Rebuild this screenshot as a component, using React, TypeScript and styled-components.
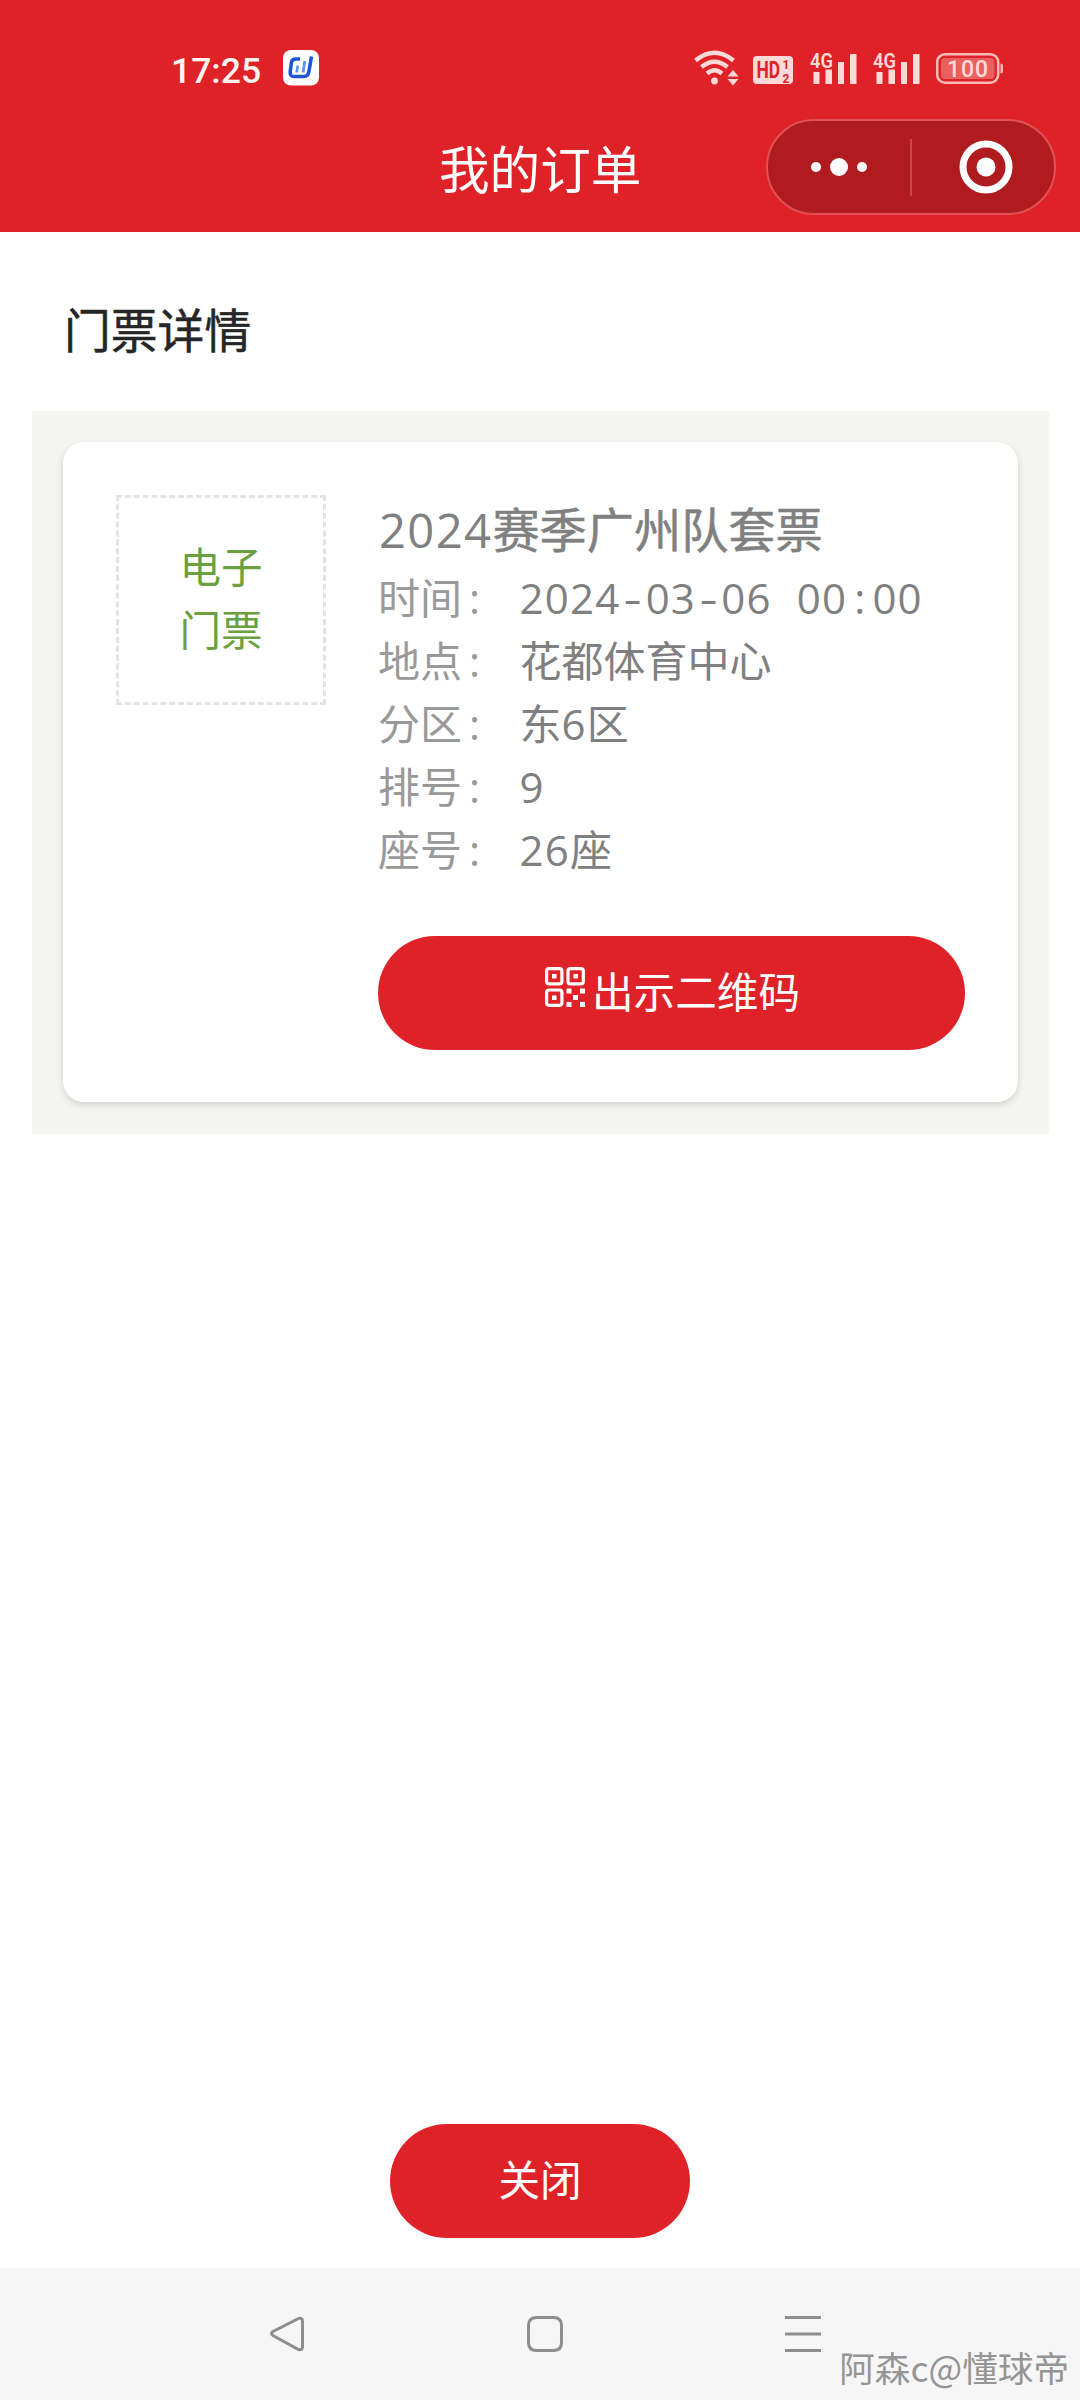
import React from "react";
import styled, { createGlobalStyle } from "styled-components";

const RED = "#df2227";
const PINK = "#ffd9d7";

const Global = createGlobalStyle`
  html, body { margin: 0; padding: 0; background: #fff; }
  body { font-family: "Open Sans", "Noto Sans CJK SC", sans-serif; }
`;

const Screen = styled.div`
  width: 1080px;
  height: 2400px;
  display: flex;
  flex-direction: column;
  overflow: hidden;
  background: #fff;
`;

const Header = styled.header`
  height: 232px;
  flex: none;
  background: ${RED};
  display: flex;
  flex-direction: column;
`;

const StatusBar = styled.div`
  height: 119px;
  box-sizing: border-box;
  padding: 16px 76px 0 171px;
  display: flex;
  align-items: flex-start;
  justify-content: space-between;
`;

const StatusGroup = styled.div<{ $gap: number }>`
  display: flex;
  align-items: flex-start;
  gap: ${(p) => p.$gap}px;
  padding-top: 34px;
`;

const Clock = styled.span`
  font: 500 35.5px/42px Roboto, sans-serif;
  color: #fff3f0;
  width: 90px;
  white-space: nowrap;
`;

const TitleBar = styled.div`
  height: 96px;
  display: grid;
  grid-template-columns: 1fr 202px 1fr;
  align-items: center;
`;

const PageTitle = styled.h1`
  grid-column: 2;
  margin: 0;
  font: 400 50.6px/94px "Noto Sans CJK SC", sans-serif;
  color: #fff;
  white-space: nowrap;
`;

const Capsule = styled.div`
  justify-self: end;
  margin-right: 24px;
  width: 290px;
  height: 96px;
  box-sizing: border-box;
  border: 2px solid #e25055;
  border-radius: 48px;
  background: #b01b1f;
  display: flex;
  align-items: center;
`;

const CapsuleHalf = styled.div<{ $left?: number; $right?: number }>`
  flex: 0 0 142px;
  display: flex;
  align-items: center;
  justify-content: center;
  padding-left: ${(p) => p.$left ?? 0}px;
  padding-right: ${(p) => p.$right ?? 0}px;
  box-sizing: border-box;
`;

const CapsuleDivider = styled.div`
  width: 2px;
  height: 57px;
  background: #cb4549;
`;

const Heading = styled.h2`
  margin: 0;
  height: 179px;
  padding-left: 64px;
  flex: none;
  font: 400 46.8px/192px "Noto Sans CJK SC", sans-serif;
  -webkit-text-stroke: 0.5px #262626;
  color: #262626;
`;

const Panel = styled.section`
  margin: 0 31px 0 32px;
  height: 723px;
  box-sizing: border-box;
  padding: 31px;
  flex: none;
  background: #f4f4f0;
`;

const Card = styled.article`
  height: 660px;
  box-sizing: border-box;
  padding: 53px;
  display: flex;
  gap: 52px;
  align-items: flex-start;
  background: #fff;
  border-radius: 21px;
  box-shadow: 0 3px 7px rgba(0, 0, 0, 0.14);
`;

const Stub = styled.div`
  width: 210px;
  height: 210px;
  flex: none;
  box-sizing: border-box;
  border: 3px dashed #e4e4e4;
  padding-bottom: 6px;
  display: flex;
  flex-direction: column;
  align-items: center;
  justify-content: center;
  font: 400 41.5px/63px "Noto Sans CJK SC", sans-serif;
  color: #6ba03f;
`;

const Details = styled.div`
  flex: 1;
  display: flex;
  flex-direction: column;
`;

const TicketName = styled.h3`
  margin: 0 0 1px 1px;
  font: 400 47.2px/70px "Open Sans", "Noto Sans CJK SC", sans-serif;
  color: #808080;
  white-space: nowrap;
`;

const Strong = styled.span`
  -webkit-text-stroke: 0.5px #808080;
`;

const Row = styled.div`
  display: flex;
  height: 63px;
  font-size: 42px;
  line-height: 63px;
  white-space: pre;
`;

const Label = styled.span`
  width: 141.500px;
  color: #999;
`;

const Value = styled.span`
  color: #808080;
`;

const Digits = styled.span`
  letter-spacing: 0.029em;
`;

const Cell = styled.span<{ $side: number }>`
  padding: 0 ${(p) => p.$side}px;
`;

const Hyphen = styled.span`
  display: inline-block;
  width: 25.2px;
  text-align: center;
  transform: scaleX(1.35);
`;

const Pill = styled.button<{ $width: number; $top: number; $nudge?: number }>`
  width: ${(p) => p.$width}px;
  height: 114px;
  margin: ${(p) => p.$top}px 0 0;
  padding: 0 0 6px ${(p) => p.$nudge ?? 0}px;
  border: 0;
  border-radius: 57px;
  background: ${RED};
  color: #fff;
  display: flex;
  align-items: center;
  justify-content: center;
  gap: 7px;
  font: 400 41.6px/60px "Noto Sans CJK SC", sans-serif;
`;

const Footer = styled.footer`
  flex: 1;
  display: flex;
  align-items: flex-end;
  justify-content: center;
  padding-bottom: 30px;
`;

const NavBar = styled.nav`
  height: 132px;
  flex: none;
  position: relative;
  background: #f6f6f6;
  display: flex;
  align-items: center;
  padding-left: 268px;
  box-sizing: border-box;
  gap: 220px;
`;

const Watermark = styled.span`
  position: absolute;
  right: 11px;
  bottom: 7px;
  font: 400 35.6px/52px "Noto Sans CJK SC", sans-serif;
  color: #959595;
  white-space: nowrap;
`;

const AppBadge = () => (
  <svg width="36" height="36" viewBox="0 0 36 36">
    <rect width="36" height="35.5" rx="8" fill="#fff" />
    <path d="M17 9H13q-4 0-4.600 3.500l-1.200 9q-.6 5 4 5H21q4 0 4.800-4.500L28.500 6.500" fill="none" stroke="#1f55d6" strokeWidth="3.600" />
    <path d="M14.800 15.500l-1.100 7" stroke="#5f95ee" strokeWidth="2.600" />
    <path d="M21.800 11l-1.700 11.500" stroke="#5f95ee" strokeWidth="2.800" />
  </svg>
);

const Wifi = () => (
  <svg width="46" height="38" viewBox="0 0 46 38">
    <g fill="none" stroke={PINK} strokeWidth="4.400">
      <path d="M1.500 10.500Q20.500-5 39.500 10.500" />
      <path d="M7.500 17Q20.500 6.500 33.500 17" />
      <path d="M13 23.500Q20.500 17 28 23.500" />
    </g>
    <circle cx="20.500" cy="31" r="3.400" fill={PINK} />
    <path d="M39 20l5.500 6.500h-11zM39 35.500l5.500-6.500h-11z" fill={PINK} />
  </svg>
);

const HdSlot = styled.svg`
  margin: 0 1px 0 -3px;
`;

const HdBadge = () => (
  <HdSlot width="40" height="38" viewBox="0 0 40 38">
    <rect y="6" width="40" height="28" rx="4" fill={PINK} />
    <g fill={RED} fontFamily="Roboto, sans-serif" fontWeight="700">
      <text transform="translate(3.500 28) scale(.76 1)" fontSize="23">HD</text>
      <text x="29.500" y="19" fontSize="12">1</text>
      <text x="29.500" y="32.500" fontSize="12">2</text>
    </g>
  </HdSlot>
);

const Signal = () => (
  <svg width="47" height="38" viewBox="0 0 47 38">
    <text x="0" y="17.500" fontSize="21" fontWeight="600" fontFamily="Roboto, sans-serif" fill={PINK} textLength="23" lengthAdjust="spacingAndGlyphs">4G</text>
    <path d="M3.500 22h6v12h-6zM15.500 19.500h6.500v14.500h-6.500zM28 12h6v22h-6zM40 4h6.500v30h-6.500z" fill={PINK} />
  </svg>
);

const Battery = () => (
  <svg width="68" height="38" viewBox="0 0 68 38">
    <rect x="1.200" y="4.200" width="61" height="28.500" rx="8" fill="none" stroke="#ffb9b5" strokeWidth="2.600" />
    <rect x="5" y="8" width="53.500" height="21" rx="4" fill="#e9605f" />
    <path d="M64.500 13.500q2.500 0 2.500 2.500v5q0 2.500-2.500 2.500z" fill="#ffb9b5" />
    <text x="11" y="27" fontSize="23" fontWeight="500" fontFamily="Roboto, sans-serif" fill={PINK} textLength="41">100</text>
  </svg>
);

const Dots = () => (
  <svg width="58" height="20" viewBox="0 0 58 20" fill="#fff">
    <circle cx="6" cy="10" r="5" />
    <circle cx="29" cy="10" r="9" />
    <circle cx="52" cy="10" r="5" />
  </svg>
);

const Target = () => (
  <svg width="54" height="54" viewBox="0 0 54 54">
    <circle cx="27" cy="27" r="23" fill="none" stroke="#fff" strokeWidth="7" />
    <circle cx="27" cy="27" r="9.500" fill="#fff" />
  </svg>
);

const QrSlot = styled.svg`
  width: 40px;
  height: 40px;
  margin-bottom: 6px;
`;

const QrIcon = () => (
  <QrSlot viewBox="0 0 40 40">
    <g fill="none" stroke="#fff" strokeWidth="3.200">
      <rect x="1.600" y="1.600" width="15.300" height="15.300" rx="2.500" />
      <rect x="23" y="1.600" width="15.300" height="15.300" rx="2.500" />
      <rect x="1.600" y="23" width="15.300" height="15.300" rx="2.500" />
    </g>
    <path d="M7 7h4.500v4.500h-4.500zM28.500 7h4.500v4.500h-4.500zM7 28.500h4.500v4.500h-4.500zM21.500 21.500h5v5h-5zM35 21.500h5v5h-5zM28 28h5v5h-5zM21.500 35h5v5h-5zM35 35h5v5h-5z" fill="#fff" />
  </QrSlot>
);

const NavIcon = ({ d }: { d: string }) => (
  <svg width="38" height="38" viewBox="0 0 38 38">
    <path d={d} fill="none" stroke="#8e8e8e" strokeWidth="3" />
  </svg>
);

const rows: [string, React.ReactNode][] = [
  ["时间", <><Digits>2024</Digits><Hyphen>-</Hyphen><Digits>03</Digits><Hyphen>-</Hyphen><Digits>06</Digits><Cell $side={7.1}> </Cell><Digits>00</Digits><Cell $side={7}>:</Cell><Digits>00</Digits></>],
  ["地点", "花都体育中心"],
  ["分区", <>东<Digits>6</Digits>区</>],
  ["排号", <Digits>9</Digits>],
  ["座号", <><Digits>26</Digits>座</>],
];

export default function App() {
  return (
    <Screen>
      <Global />
      <Header>
        <StatusBar>
          <StatusGroup $gap={22}>
            <Clock>17:25</Clock>
            <AppBadge />
          </StatusGroup>
          <StatusGroup $gap={16}>
            <Wifi />
            <HdBadge />
            <Signal />
            <Signal />
            <Battery />
          </StatusGroup>
        </StatusBar>
        <TitleBar>
          <PageTitle>我的订单</PageTitle>
          <Capsule>
            <CapsuleHalf $right={1}><Dots /></CapsuleHalf>
            <CapsuleDivider />
            <CapsuleHalf $left={5}><Target /></CapsuleHalf>
          </Capsule>
        </TitleBar>
      </Header>
      <Heading>门票详情</Heading>
      <Panel>
        <Card>
          <Stub>
            <span>电子</span>
            <span>门票</span>
          </Stub>
          <Details>
            <TicketName><Digits>2024</Digits><Strong>赛季广州队套票</Strong></TicketName>
            {rows.map(([label, value]) => (
              <Row key={label}>
                <Label>{label}<Cell $side={7}>:</Cell></Label>
                <Value>{value}</Value>
              </Row>
            ))}
            <Pill $width={587} $top={55} $nudge={2}><QrIcon />出示二维码</Pill>
          </Details>
        </Card>
      </Panel>
      <Footer>
        <Pill $width={300} $top={0}>关闭</Pill>
      </Footer>
      <NavBar>
        <NavIcon d="M30.500 3.500L5 16.500q-3 2 0 4L30.500 34.500q4 1 4-3v-25q0-4-4-3z" />
        <NavIcon d="M10.500 2.500h17q8 0 8 8v17q0 8-8 8h-17q-8 0-8-8v-17q0-8 8-8z" />
        <NavIcon d="M1 2.500h36M1 19h36M1 35.500h36" />
        <Watermark>阿森c@懂球帝</Watermark>
      </NavBar>
    </Screen>
  );
}
